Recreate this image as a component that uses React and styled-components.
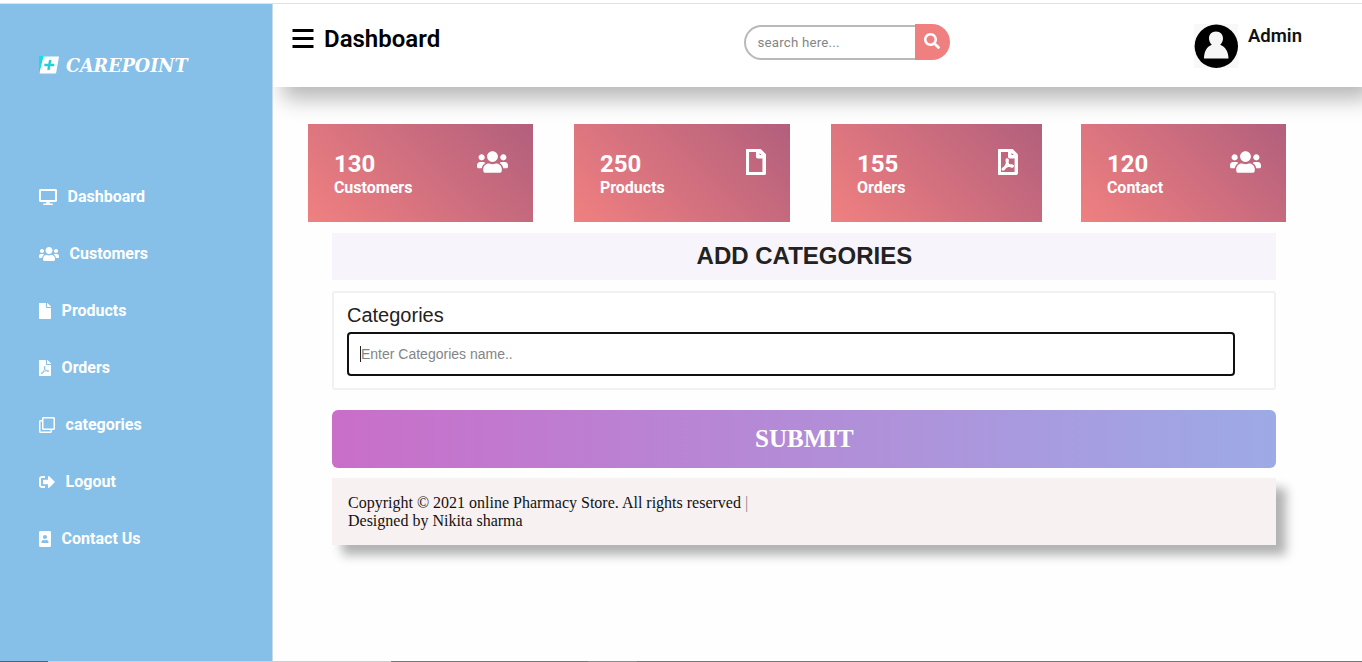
import React from "react";
import styled, { createGlobalStyle } from "styled-components";
import {
  FaUsers,
  FaDesktop,
  FaFile,
  FaFilePdf,
  FaRegClone,
  FaSignOutAlt,
  FaPortrait,
  FaRegFile,
  FaRegFilePdf,
  FaSearch,
} from "react-icons/fa";

const GlobalStyle = createGlobalStyle`
  * { box-sizing: border-box; }
  body {
    margin: 0;
    background: #fefefe;
    font-family: Roboto, "Liberation Sans", sans-serif;
    overflow: hidden;
  }
  svg { display: block; flex: none; }
`;

const Page = styled.div`
  display: flex;
  flex-direction: column;
  height: 662px;
`;

const TopLine = styled.div`
  flex: none;
  height: 4px;
  background: #fff;
  border-bottom: 1px solid #e2e2e2;
`;

const Columns = styled.div`
  display: flex;
  flex: 1;
  min-height: 0;
`;

const Sidebar = styled.aside`
  width: 273px;
  flex: none;
  background: #86c0e8;
  border-right: 1px solid #c5d9e6;
  color: #fff;
  padding: 51px 0 0 39px;
`;

const Brand = styled.div`
  display: flex;
  align-items: center;
  gap: 6px;
  height: 20px;
  font: italic bold 19px/20px "DejaVu Serif", serif;
`;

const BrandName = styled.span`
  display: block;
  transform: scaleX(0.925);
  transform-origin: left;
  white-space: nowrap;
`;

const Nav = styled.nav`
  margin-top: 93px;
`;

const NavItem = styled.a`
  display: flex;
  align-items: center;
  gap: 10.6px;
  height: 57px;
  font-size: 16px;
  font-weight: 700;
  white-space: nowrap;
`;

const Main = styled.main`
  flex: 1;
  min-width: 0;
  background: #fefefe;
  overflow: hidden;
`;

const Header = styled.header`
  display: grid;
  grid-template-columns: 451.5px 450.5px 1fr;
  height: 83px;
  padding: 20px 0 0 19px;
  background: #fff;
  box-shadow: 10px 12px 20px rgba(0, 0, 0, 0.28);
`;

const Title = styled.h1`
  display: flex;
  align-items: center;
  gap: 10px;
  margin: 0;
  height: 30px;
  font-size: 24px;
  font-weight: 600;
  color: #000;
`;

const Search = styled.div`
  display: flex;
  align-items: flex-start;
  height: 36px;
`;

const SearchInput = styled.input`
  width: 171.5px;
  height: 35px;
  margin-top: 1px;
  padding: 0 0 0 12px;
  border: 2px solid #b9b9b9;
  border-right: 0;
  border-radius: 18px 0 0 18px;
  background: #fff;
  outline: 0;
  font: 13.3px Roboto, sans-serif;
  letter-spacing: 0.2px;
  &::placeholder { color: #858585; opacity: 1; }
`;

const SearchButton = styled.button`
  display: flex;
  align-items: center;
  justify-content: center;
  width: 35px;
  height: 36px;
  padding: 0 2px 2px 0;
  border: 0;
  border-radius: 0 18px 18px 0;
  background: #f08080;
  color: #fff;
`;

const Account = styled.div`
  display: flex;
  align-items: flex-start;
  gap: 10px;
`;

const AccountName = styled.span`
  font-size: 18.5px;
  font-weight: 600;
  line-height: 24px;
  color: #111;
`;

const Cards = styled.section`
  display: grid;
  grid-template-columns: 266px 257px 250px 204.5px;
  height: 98px;
  margin: 37px 0 0 35.4px;
`;

const Card = styled.article`
  display: flex;
  justify-content: space-between;
  align-items: flex-start;
  margin-right: ${(p) => p.$gap}px;
  padding: 25px 24.5px 0 25.5px;
  background: linear-gradient(45deg, #f08080, #b25f7d);
  color: #fff;
  font-weight: 700;
`;

const Count = styled.div`
  font-size: 24px;
  line-height: 30px;
`;

const CardLabel = styled.div`
  font-size: 16px;
  line-height: 18px;
`;

const CardIcon = styled.div`
  stroke: currentColor;
  path { stroke-width: ${(p) => p.$weight}; }
`;

const Content = styled.section`
  width: 944px;
  margin: 11px 0 0 59.4px;
`;

const Heading = styled.h2`
  margin: 0 0 11px;
  height: 47px;
  background: #f7f5fb;
  color: #222;
  text-align: center;
  font: bold 24px/46px "Liberation Sans", sans-serif;
`;

const FormBox = styled.div`
  height: 99px;
  padding: 10px 12.6px;
  border: 2px solid #f1f1f1;
  border-radius: 3px;
  background: #fff;
`;

const Label = styled.label`
  display: block;
  height: 29px;
  color: #222;
  font: 20px/24px "Liberation Sans", sans-serif;
`;

const FieldFrame = styled.div`
  display: flex;
  align-items: center;
  width: 888px;
  height: 44px;
  padding-left: 11px;
  border: 2px solid #101010;
  border-radius: 4px;
`;

const Caret = styled.span`
  width: 1px;
  height: 16px;
  background: #222;
`;

const FieldInput = styled.input`
  flex: 1;
  border: 0;
  padding: 0;
  outline: 0;
  background: transparent;
  font: 14px "Liberation Sans", sans-serif;
  &::placeholder { color: #858585; opacity: 1; }
`;

const Submit = styled.button`
  display: block;
  width: 100%;
  height: 58px;
  margin: 20px 0 10px;
  padding: 0;
  border: 0;
  border-radius: 6px;
  background: linear-gradient(to right, #c96ec9, #9daae6);
  color: #fff;
  font: bold 25px "Liberation Serif", serif;
`;

const Footer = styled.footer`
  height: 67px;
  padding: 16px 15.6px;
  background: #f7f1f1;
  box-shadow: 10px 10px 10px rgba(0, 0, 0, 0.3);
  color: #111;
  font: 16px/18px "Liberation Serif", serif;
`;

const Divider = styled.span`
  color: #888;
`;

const BottomEdge = styled.div`
  flex: none;
  height: 1px;
  background: linear-gradient(to right, #446a72 0 48px, #cfcfcf 48px 391px, #777 391px 588px, #8c8c8c 588px 637px, #777 637px);
`;

const BrandMark = () => (
  <svg width="21" height="18" viewBox="0 0 21 18">
    <path d="M0 0H8L4 17H0Z" fill="#19dce6" />
    <path d="M4.5 .5H20L17.2 16.5Q17 17.5 16 17.5H1.5Q.3 17.5 .6 16.3Z" fill="#fff" />
    <path d="M11.2 4 9.4 14M5.3 9H15.3" stroke="#25cfd8" strokeWidth="2.4" />
  </svg>
);

const MenuBars = () => (
  <svg width="22" height="22" viewBox="0 0 22 22">
    <path d="M.5 2.5H21.5M.5 10.5H21.5M.5 18.5H21.5" stroke="#000" strokeWidth="2.8" />
  </svg>
);

const Avatar = () => (
  <svg width="44" height="44" viewBox="0 0 44 44">
    <path d="M0 0H44V44H0Z" fill="#f8f8f8" />
    <circle cx="22.3" cy="22.3" r="21.7" fill="#000" />
    <path
      d="M22 7.5C26.5 7.5 29 10.5 29 14.5C29 17 27.8 19.2 26.2 20.7C31.5 22.7 34.5 28 34.5 34.5H10C10 28 12.5 22.7 17.8 20.7C16.2 19.2 15 17 15 14.5C15 10.5 17.5 7.5 22 7.5Z"
      fill="#f6f6f6"
    />
  </svg>
);

const Glyph = ({ icon: Icon, width, height }) => <Icon style={{ width, height }} />;

const navItems = [
  ["Dashboard", FaDesktop, 18],
  ["Customers", FaUsers, 20],
  ["Products", FaFile, 12],
  ["Orders", FaFilePdf, 12],
  ["categories", FaRegClone, 16],
  ["Logout", FaSignOutAlt, 16],
  ["Contact Us", FaPortrait, 12],
];

const cards = [
  { count: "130", name: "Customers", icon: FaUsers, width: 31, weight: 0, gap: 41.5 },
  { count: "250", name: "Products", icon: FaRegFile, width: 19.5, weight: 24, gap: 41 },
  { count: "155", name: "Orders", icon: FaRegFilePdf, width: 19.5, weight: 20, gap: 39 },
  { count: "120", name: "Contact", icon: FaUsers, width: 31, weight: 0, gap: 0 },
];

export default function App() {
  return (
    <Page>
      <GlobalStyle />
      <TopLine />
      <Columns>
        <Sidebar>
          <Brand>
            <BrandMark />
            <BrandName>CAREPOINT</BrandName>
          </Brand>
          <Nav>
            {navItems.map(([name, icon, width]) => (
              <NavItem key={name}>
                <Glyph icon={icon} width={width} height={16} />
                {name}
              </NavItem>
            ))}
          </Nav>
        </Sidebar>
        <Main>
          <Header>
            <Title>
              <MenuBars />
              Dashboard
            </Title>
            <Search>
              <SearchInput placeholder="search here..." />
              <SearchButton aria-label="Search">
                <Glyph icon={FaSearch} width={16} height={16} />
              </SearchButton>
            </Search>
            <Account>
              <Avatar />
              <AccountName>Admin</AccountName>
            </Account>
          </Header>
          <Cards>
            {cards.map(({ count, name, icon, width, weight, gap }) => (
              <Card key={name} $gap={gap}>
                <div>
                  <Count>{count}</Count>
                  <CardLabel>{name}</CardLabel>
                </div>
                <CardIcon $weight={weight}>
                  <Glyph icon={icon} width={width} height={26} />
                </CardIcon>
              </Card>
            ))}
          </Cards>
          <Content>
            <Heading>ADD CATEGORIES</Heading>
            <FormBox>
              <Label>Categories</Label>
              <FieldFrame>
                <Caret />
                <FieldInput placeholder="Enter Categories name.." />
              </FieldFrame>
            </FormBox>
            <Submit>SUBMIT</Submit>
            <Footer>
              Copyright © 2021 online Pharmacy Store. All rights reserved <Divider>|</Divider>
              <br />
              Designed by Nikita sharma
            </Footer>
          </Content>
        </Main>
      </Columns>
      <BottomEdge />
    </Page>
  );
}
